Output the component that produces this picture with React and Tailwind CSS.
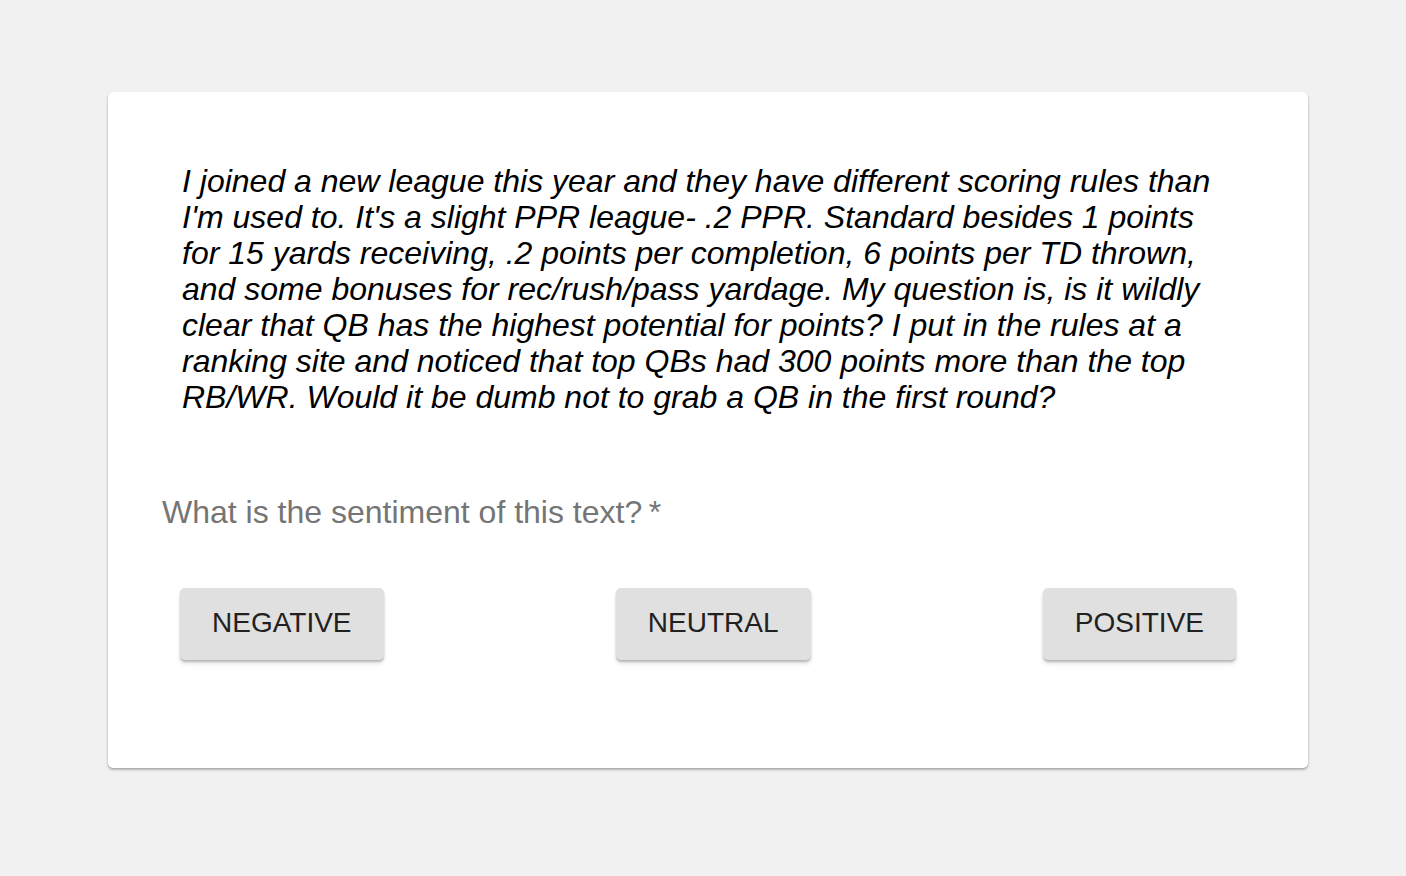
export default function App() {
    const choices = ['NEGATIVE', 'NEUTRAL', 'POSITIVE']
    const lines = [
        'I joined a new league this year and they have different scoring rules than',
        "I'm used to. It's a slight PPR league- .2 PPR. Standard besides 1 points",
        'for 15 yards receiving, .2 points per completion, 6 points per TD thrown,',
        'and some bonuses for rec/rush/pass yardage. My question is, is it wildly',
        'clear that QB has the highest potential for points? I put in the rules at a',
        'ranking site and noticed that top QBs had 300 points more than the top',
        'RB/WR. Would it be dumb not to grab a QB in the first round?',
    ]

    return (
        <div className="min-h-[876px] bg-[#f1f1f1] pt-[92px] pl-[108px]" style={{ fontFamily: '"Liberation Sans", Arial, sans-serif' }}>
            <div className="w-[1200px] h-[676px] bg-white rounded-[5px] shadow-[0_2px_3px_rgba(0,0,0,0.22),0_1px_2px_rgba(0,0,0,0.14)] px-[54px] pt-[71px]">
                <p className="ml-[20px] italic text-[32px] leading-[36px] text-black">
                    {lines.map((l) => (
                        <span key={l} className="block whitespace-nowrap">{l}</span>
                    ))}
                </p>

                <div className="mt-[79px] text-[32px] leading-[36px] text-[#757575]">
                    What is the sentiment of this text?&thinsp;*
                </div>

                <div className="mt-[58px] mx-[18px] flex justify-between">
                    {choices.map((c) => (
                        <button
                            key={c}
                            className="h-[72px] px-[32px] pb-[3px] rounded-[5px] bg-[#e0e0e0] text-[28px] text-[#212121] shadow-[0_2px_2px_rgba(0,0,0,0.2),0_4px_4px_rgba(0,0,0,0.1)]"
                        >
                            {c}
                        </button>
                    ))}
                </div>
            </div>
        </div>
    )
}
